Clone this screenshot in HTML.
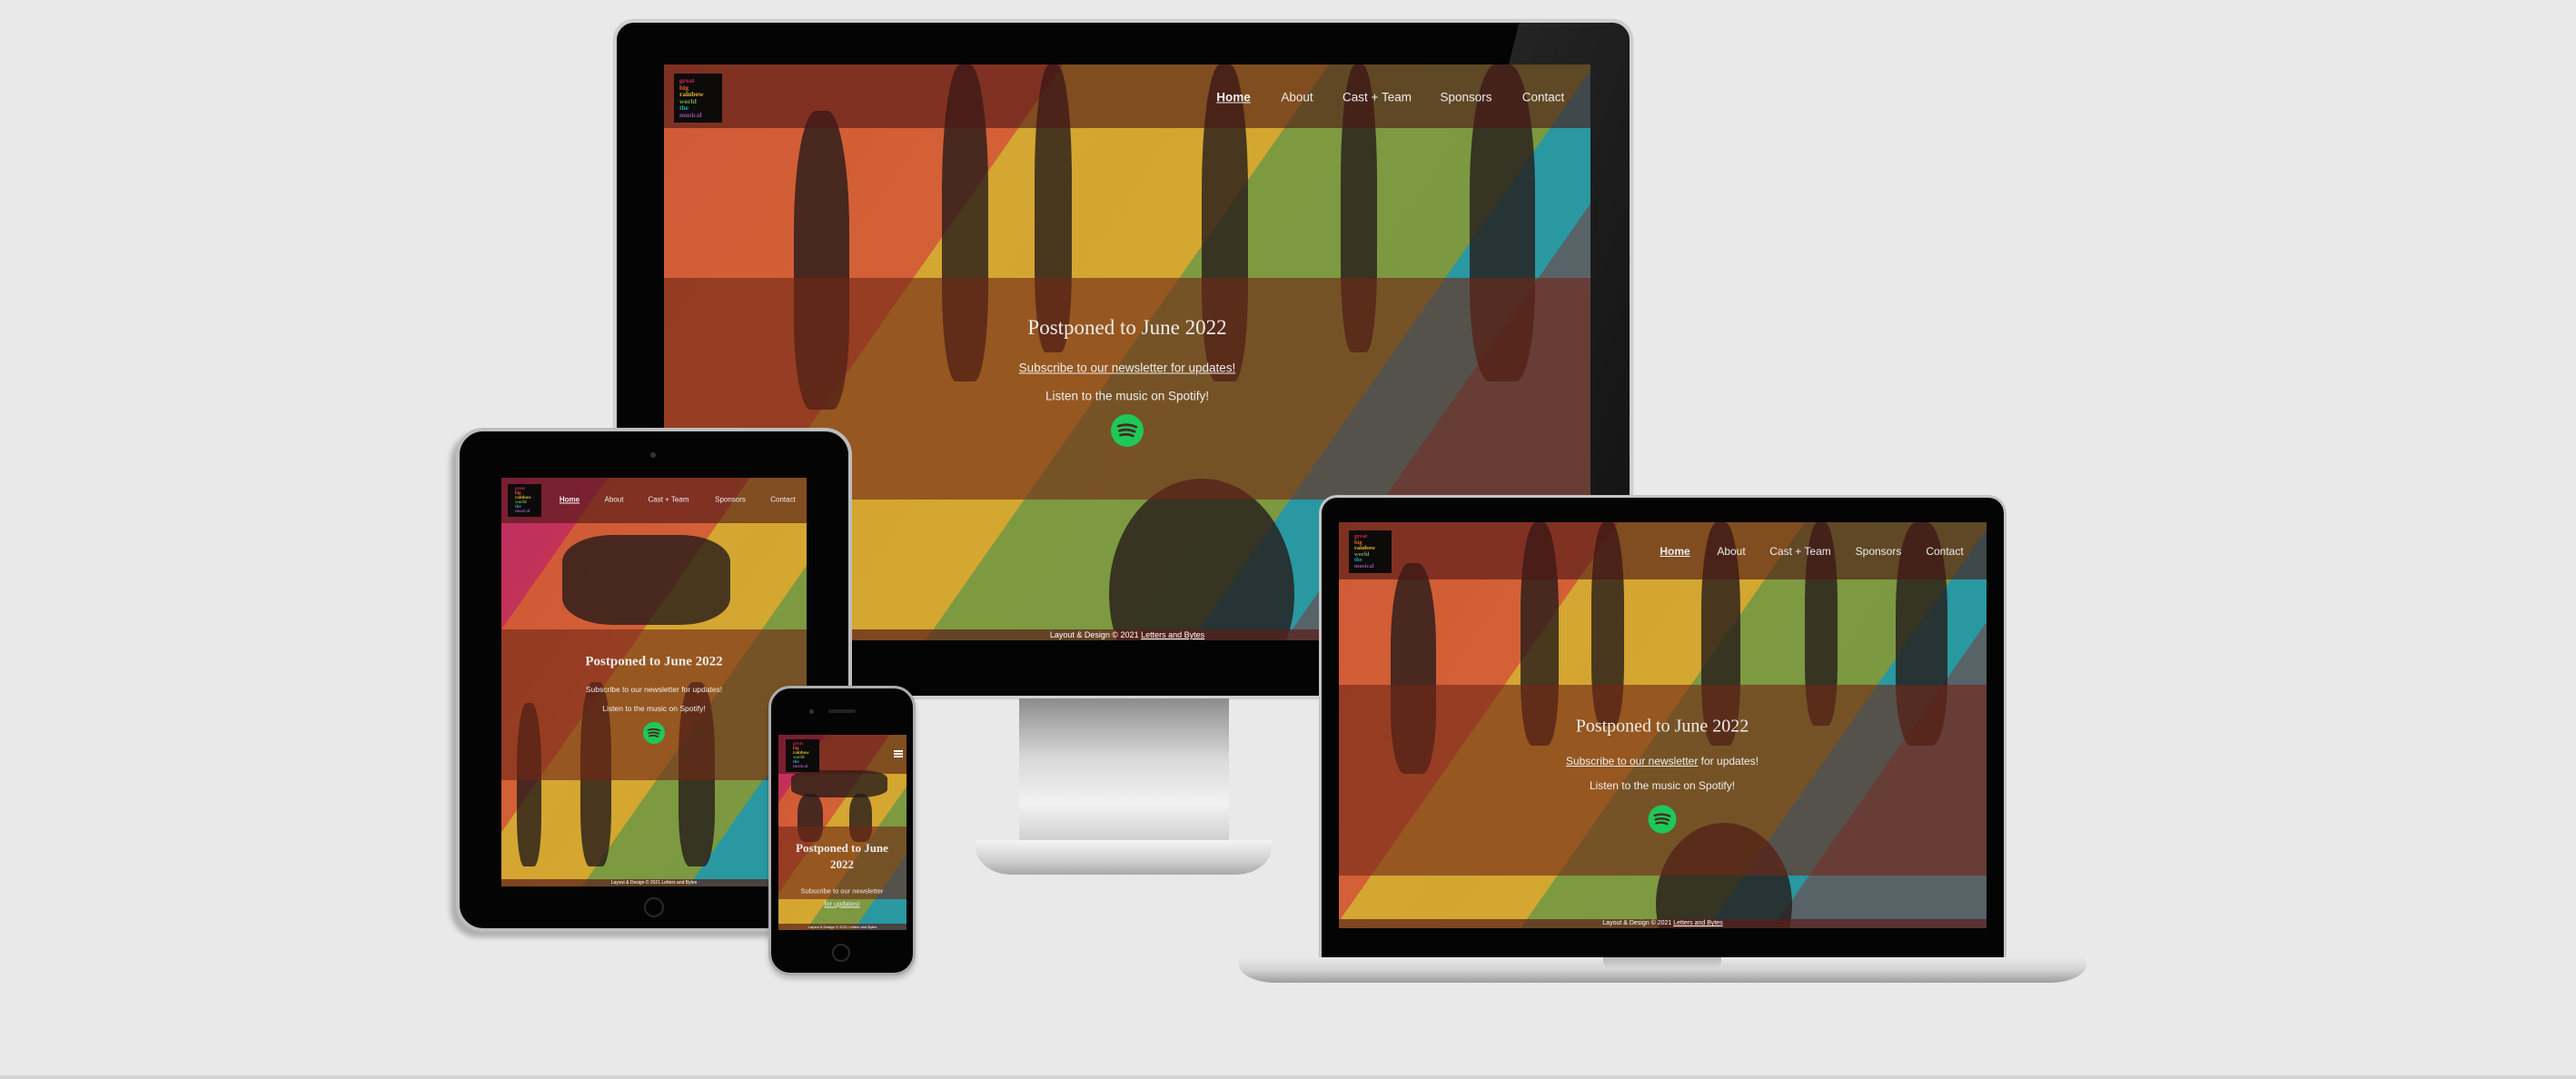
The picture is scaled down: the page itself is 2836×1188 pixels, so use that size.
<!DOCTYPE html>
<html><head><meta charset="utf-8"><style>
*{margin:0;padding:0;box-sizing:border-box}
body{width:2836px;height:1188px;background:#e9e9e9;position:relative;overflow:hidden;font-family:"Liberation Sans",sans-serif}
.abs{position:absolute}
.scr{position:absolute;z-index:0;overflow:hidden;background:linear-gradient(125deg,#e0603b 0%,#e2673a 30%,#e3b236 30%,#e2b334 50%,#86a546 50%,#84a346 70%,#2aa3ae 70%,#2aa3ae 77%,#5d6a70 77%)}
.scr.tab{background:linear-gradient(125deg,#c9306a 0%,#d2355f 18%,#e0603b 18%,#e2673a 42%,#e3b236 42%,#e2b334 62%,#86a546 62%,#84a346 80%,#2aa3ae 80%)}
.scr::after{content:"";position:absolute;inset:0;background:rgba(40,20,15,.08);pointer-events:none}
.leg{position:absolute;background:rgba(38,28,28,.8);border-radius:40% 40% 30% 30%}
.hb{position:absolute;left:0;top:0;width:100%;background:rgba(80,22,22,.62)}
.mb{position:absolute;left:0;width:100%;background:rgba(120,40,25,.62)}
.ft{position:absolute;left:0;bottom:0;width:100%;background:rgba(90,30,25,.7);color:#fff;text-align:center;white-space:nowrap;z-index:2}
.logo{position:absolute;background:#0a0a0a;font-family:"Liberation Serif",serif;font-weight:bold;line-height:1}
.logo span{display:block}
.c{position:absolute;transform:translate(-50%,-50%);white-space:nowrap;color:#fff;text-align:center}
.t{font-family:"Liberation Serif",serif}
.u{text-decoration:underline}
.sp{position:absolute;transform:translate(-50%,-50%)}
.dev{position:absolute;background:#040404}
</style></head><body>

<!-- MONITOR -->
<div class="dev" style="left:676px;top:22px;width:1121px;height:747px;border-radius:22px;border:3px solid #cfcfcf;box-shadow:0 0 2px #999"></div>
<div class="abs" style="left:1490px;top:25px;width:304px;height:741px;background:linear-gradient(110deg,rgba(255,255,255,0) 30%,rgba(255,255,255,.13) 30%,rgba(255,255,255,.05));border-radius:0 20px 20px 0;clip-path:polygon(60% 0,100% 0,100% 100%,0 100%)"></div>
<div class="abs" style="left:1122px;top:769px;width:231px;height:165px;background:linear-gradient(180deg,#8c8c8c,#d8d8d8 40%,#f2f2f2 70%,#c9c9c9)"></div>
<div class="abs" style="left:1074px;top:925px;width:326px;height:38px;border-radius:0 0 40px 40px/0 0 30px 30px;background:linear-gradient(180deg,#f4f4f4,#cfcfcf 60%,#a8a8a8)"></div>

<div class="scr" style="left:731px;top:71px;width:1020px;height:634px">
 <div class="leg" style="left:14%;top:8%;width:6%;height:52%"></div>
 <div class="leg" style="left:30%;top:0;width:5%;height:55%"></div>
 <div class="leg" style="left:40%;top:0;width:4%;height:50%"></div>
 <div class="leg" style="left:58%;top:0;width:5%;height:55%"></div>
 <div class="leg" style="left:73%;top:0;width:4%;height:50%"></div>
 <div class="leg" style="left:87%;top:0;width:7%;height:55%"></div>
 <div class="leg" style="left:48%;top:72%;width:20%;height:40%;border-radius:50%"></div>
 <div class="hb" style="height:11%"></div>
 <div class="mb" style="top:37%;height:38.5%"></div>
 <div class="ft" style="height:12px;font-size:9px;line-height:12px">Layout &amp; Design © 2021 <span class="u">Letters and Bytes</span></div>
 <div class="logo" style="left:11px;top:10px;width:53px;height:54px;padding:4px 6px;font-size:7.5px"><span style="color:#e0245e">great</span><span style="color:#f26b2a">big</span><span style="color:#f5c431">rainbow</span><span style="color:#7ab648">world</span><span style="color:#1fb5c0">the</span><span style="color:#9b59b6">musical</span></div>
 <div class="c u" style="left:627px;top:36px;font-size:13.5px;font-weight:bold">Home</div>
 <div class="c" style="left:697px;top:36px;font-size:13.5px">About</div>
 <div class="c" style="left:785px;top:36px;font-size:13.5px">Cast + Team</div>
 <div class="c" style="left:883px;top:36px;font-size:13.5px">Sponsors</div>
 <div class="c" style="left:968px;top:36px;font-size:13.5px">Contact</div>
 <div class="c t" style="left:510px;top:290px;font-size:23px">Postponed to June 2022</div>
 <div class="c u" style="left:510px;top:334px;font-size:13.5px">Subscribe to our newsletter for updates!</div>
 <div class="c" style="left:510px;top:365px;font-size:13.5px">Listen to the music on Spotify!</div>
 <svg class="sp" style="left:510px;top:403px" width="36" height="36" viewBox="0 0 24 24"><circle cx="12" cy="12" r="12" fill="#1ed760"/><path d="M5.5 8.8Q12 6.6 18.5 9.4M6.3 12.2Q12 10.4 17.4 12.8M7 15.4Q12 14 16.2 16" stroke="#4a2a20" stroke-width="1.8" fill="none" stroke-linecap="round"/></svg>
</div>

<!-- LAPTOP -->
<div class="dev" style="left:1452px;top:545px;width:757px;height:512px;border-radius:20px 20px 0 0;border:3px solid #c4c4c4;border-bottom:none"></div>
<div class="abs" style="left:1364px;top:1054px;width:933px;height:28px;border-radius:2px 2px 40px 40px/2px 2px 20px 20px;background:linear-gradient(180deg,#e9e9e9,#d2d2d2 50%,#9e9e9e)"></div>
<div class="abs" style="left:1765px;top:1054px;width:130px;height:12px;border-radius:0 0 8px 8px;background:linear-gradient(180deg,#b8b8b8,#d6d6d6)"></div>

<div class="scr" style="left:1474px;top:575px;width:713px;height:447px">
 <div class="leg" style="left:8%;top:10%;width:7%;height:52%"></div>
 <div class="leg" style="left:28%;top:0;width:6%;height:55%"></div>
 <div class="leg" style="left:39%;top:0;width:5%;height:50%"></div>
 <div class="leg" style="left:56%;top:0;width:6%;height:55%"></div>
 <div class="leg" style="left:72%;top:0;width:5%;height:50%"></div>
 <div class="leg" style="left:86%;top:0;width:8%;height:55%"></div>
 <div class="leg" style="left:49%;top:74%;width:21%;height:40%;border-radius:50%"></div>
 <div class="hb" style="height:14%"></div>
 <div class="mb" style="top:40%;height:47%"></div>
 <div class="ft" style="height:10px;font-size:7px;line-height:10px">Layout &amp; Design © 2021 <span class="u">Letters and Bytes</span></div>
 <div class="logo" style="left:11px;top:9px;width:47px;height:47px;padding:4px 6px;font-size:6.5px"><span style="color:#e0245e">great</span><span style="color:#f26b2a">big</span><span style="color:#f5c431">rainbow</span><span style="color:#7ab648">world</span><span style="color:#1fb5c0">the</span><span style="color:#9b59b6">musical</span></div>
 <div class="c u" style="left:370px;top:32px;font-size:12px;font-weight:bold">Home</div>
 <div class="c" style="left:432px;top:32px;font-size:12px">About</div>
 <div class="c" style="left:508px;top:32px;font-size:12px">Cast + Team</div>
 <div class="c" style="left:594px;top:32px;font-size:12px">Sponsors</div>
 <div class="c" style="left:667px;top:32px;font-size:12px">Contact</div>
 <div class="c t" style="left:356px;top:225px;font-size:20px">Postponed to June 2022</div>
 <div class="c" style="left:356px;top:263px;font-size:12px"><span class="u">Subscribe to our newsletter</span> for updates!</div>
 <div class="c" style="left:356px;top:290px;font-size:12px">Listen to the music on Spotify!</div>
 <svg class="sp" style="left:356px;top:327px" width="31" height="31" viewBox="0 0 24 24"><circle cx="12" cy="12" r="12" fill="#1ed760"/><path d="M5.5 8.8Q12 6.6 18.5 9.4M6.3 12.2Q12 10.4 17.4 12.8M7 15.4Q12 14 16.2 16" stroke="#4a2a20" stroke-width="1.8" fill="none" stroke-linecap="round"/></svg>
</div>

<!-- TABLET -->
<div class="dev" style="left:502px;top:471px;width:436px;height:555px;border-radius:30px;border:4px solid #bdbdbd;box-shadow:-6px 6px 6px rgba(0,0,0,.25)"></div>
<div class="abs" style="left:716px;top:498px;width:6px;height:6px;border-radius:50%;background:#334"></div>
<div class="abs" style="left:709px;top:988px;width:22px;height:22px;border-radius:50%;border:2px solid #2a2a2a"></div>
<div class="scr tab" style="left:552px;top:526px;width:336px;height:450px">
 <div class="leg" style="left:20%;top:14%;width:55%;height:22%;border-radius:30%"></div>
 <div class="leg" style="left:5%;top:55%;width:8%;height:40%"></div>
 <div class="leg" style="left:26%;top:50%;width:10%;height:45%"></div>
 <div class="leg" style="left:58%;top:50%;width:12%;height:45%"></div>
 <div class="hb" style="height:11%"></div>
 <div class="mb" style="top:37%;height:37%"></div>
 <div class="ft" style="height:8px;font-size:5px;line-height:8px">Layout &amp; Design © 2021 Letters and Bytes</div>
 <div class="logo" style="left:7px;top:7px;width:37px;height:36px;padding:3px 8px;font-size:5px"><span style="color:#e0245e">great</span><span style="color:#f26b2a">big</span><span style="color:#f5c431">rainbow</span><span style="color:#7ab648">world</span><span style="color:#1fb5c0">the</span><span style="color:#9b59b6">musical</span></div>
 <div class="c u" style="left:75px;top:24px;font-size:8px;font-weight:bold">Home</div>
 <div class="c" style="left:124px;top:24px;font-size:8px">About</div>
 <div class="c" style="left:184px;top:24px;font-size:8px">Cast + Team</div>
 <div class="c" style="left:252px;top:24px;font-size:8px">Sponsors</div>
 <div class="c" style="left:310px;top:24px;font-size:8px">Contact</div>
 <div class="c t" style="left:168px;top:203px;font-size:15px;font-weight:bold">Postponed to June 2022</div>
 <div class="c" style="left:168px;top:233px;font-size:8.5px">Subscribe to our newsletter for updates!</div>
 <div class="c" style="left:168px;top:254px;font-size:8.5px">Listen to the music on Spotify!</div>
 <svg class="sp" style="left:168px;top:281px" width="24" height="24" viewBox="0 0 24 24"><circle cx="12" cy="12" r="12" fill="#1ed760"/><path d="M5.5 8.8Q12 6.6 18.5 9.4M6.3 12.2Q12 10.4 17.4 12.8M7 15.4Q12 14 16.2 16" stroke="#4a2a20" stroke-width="1.8" fill="none" stroke-linecap="round"/></svg>
</div>

<!-- PHONE -->
<div class="dev" style="left:846px;top:755px;width:162px;height:319px;border-radius:24px;border:3px solid #acacac;box-shadow:0 4px 6px rgba(0,0,0,.2)"></div>
<div class="abs" style="left:891px;top:781px;width:5px;height:5px;border-radius:50%;background:#334"></div>
<div class="abs" style="left:912px;top:781px;width:30px;height:4px;border-radius:2px;background:#222"></div>
<div class="abs" style="left:916px;top:1039px;width:20px;height:20px;border-radius:50%;border:2px solid #2a2a2a"></div>
<div class="scr tab" style="left:857px;top:809px;width:141px;height:215px">
 <div class="leg" style="left:10%;top:18%;width:75%;height:14%;border-radius:30%"></div>
 <div class="leg" style="left:15%;top:30%;width:20%;height:25%"></div>
 <div class="leg" style="left:55%;top:30%;width:18%;height:25%"></div>
 <div class="hb" style="height:20%"></div>
 <div class="mb" style="top:47%;height:37%"></div>
 <div class="ft" style="height:7px;font-size:4px;line-height:7px">Layout &amp; Design © 2021 Letters and Bytes</div>
 <div class="logo" style="left:8px;top:5px;width:37px;height:36px;padding:3px 8px;font-size:5px"><span style="color:#e0245e">great</span><span style="color:#f26b2a">big</span><span style="color:#f5c431">rainbow</span><span style="color:#7ab648">world</span><span style="color:#1fb5c0">the</span><span style="color:#9b59b6">musical</span></div>
 <div class="abs" style="left:127px;top:17px;width:10px;height:8px;border-top:2px solid #fff;border-bottom:2px solid #fff;z-index:3"></div>
 <div class="abs" style="left:127px;top:20px;width:10px;height:2px;background:#fff;z-index:3"></div>
 <div class="c t" style="left:70px;top:125px;font-size:13px;font-weight:bold">Postponed to June</div>
 <div class="c t" style="left:70px;top:143px;font-size:13px;font-weight:bold">2022</div>
 <div class="c" style="left:70px;top:172px;font-size:7.5px">Subscribe to our newsletter</div>
 <div class="c u" style="left:70px;top:186px;font-size:7.5px">for updates!</div>
</div>

<div class="abs" style="left:0;top:1184px;width:2836px;height:4px;background:#d6d6d6"></div>
</body></html>
